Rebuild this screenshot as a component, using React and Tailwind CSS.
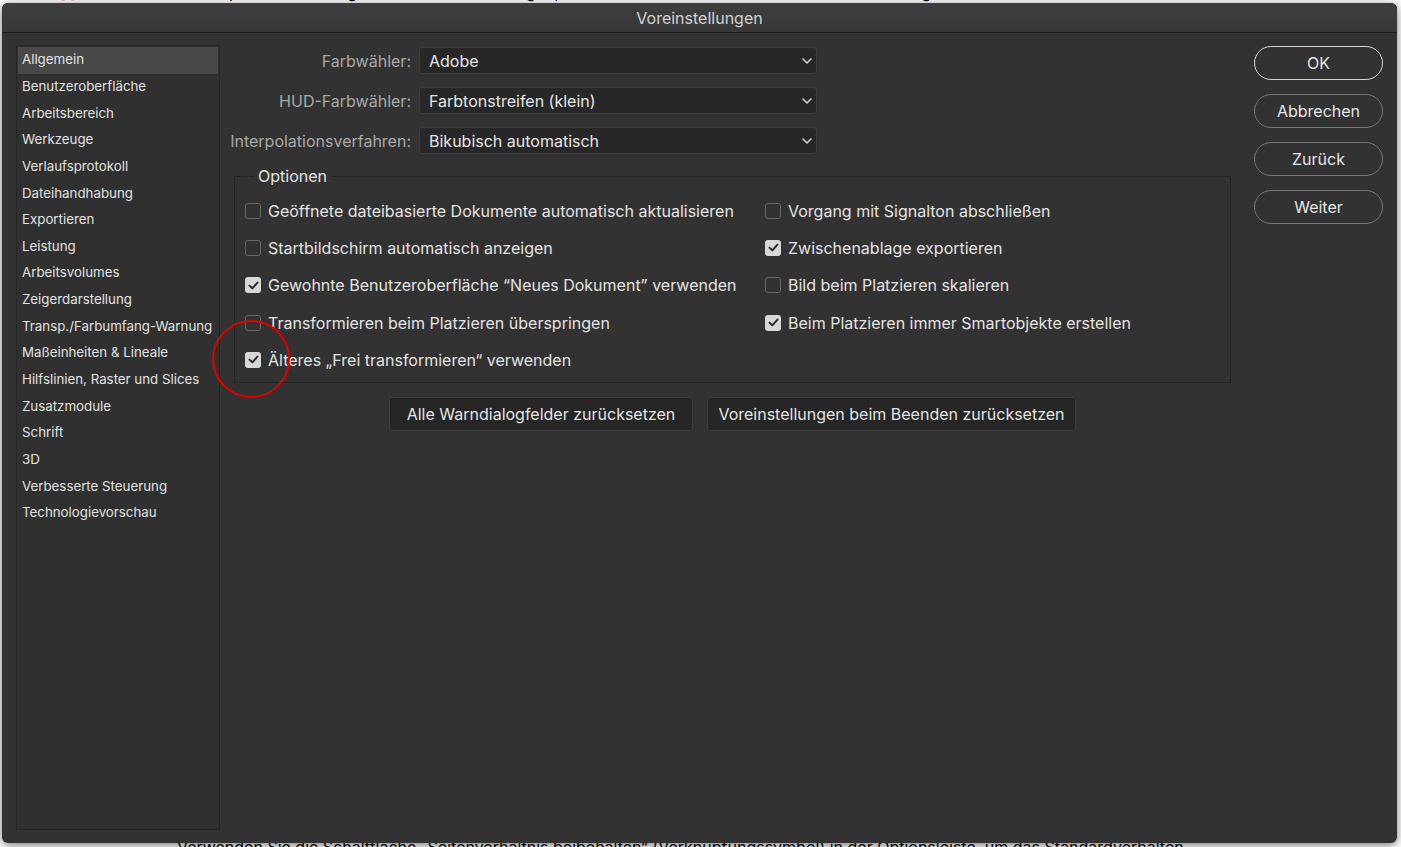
import React from "react";

const FONT = { fontFamily: "Inter, 'Noto Sans', sans-serif" };

const sidebarItems = [
  "Allgemein",
  "Benutzeroberfläche",
  "Arbeitsbereich",
  "Werkzeuge",
  "Verlaufsprotokoll",
  "Dateihandhabung",
  "Exportieren",
  "Leistung",
  "Arbeitsvolumes",
  "Zeigerdarstellung",
  "Transp./Farbumfang-Warnung",
  "Maßeinheiten & Lineale",
  "Hilfslinien, Raster und Slices",
  "Zusatzmodule",
  "Schrift",
  "3D",
  "Verbesserte Steuerung",
  "Technologievorschau",
];

const selects = [
  ["Farbwähler:", "Adobe"],
  ["HUD-Farbwähler:", "Farbtonstreifen (klein)"],
  ["Interpolationsverfahren:", "Bikubisch automatisch"],
];

const leftOpts = [
  [false, "Geöffnete dateibasierte Dokumente automatisch aktualisieren"],
  [false, "Startbildschirm automatisch anzeigen"],
  [true, "Gewohnte Benutzeroberfläche “Neues Dokument” verwenden"],
  [false, "Transformieren beim Platzieren überspringen"],
  [true, "Älteres „Frei transformieren“ verwenden"],
];

const rightOpts = [
  [false, "Vorgang mit Signalton abschließen"],
  [true, "Zwischenablage exportieren"],
  [false, "Bild beim Platzieren skalieren"],
  [true, "Beim Platzieren immer Smartobjekte erstellen"],
];

function Chevron() {
  return (
    <svg width="10" height="6" viewBox="0 0 10 6" fill="none">
      <path d="M1 1l4 4 4-4" stroke="#cfcfcf" strokeWidth="1.6" strokeLinecap="round" strokeLinejoin="round" />
    </svg>
  );
}

function Checkbox({ checked }) {
  if (checked) {
    return (
      <span className="flex h-[16px] w-[16px] shrink-0 items-center justify-center rounded-[3px] bg-[#d8d8d8]">
        <svg width="11" height="9" viewBox="0 0 11 9" fill="none">
          <path d="M1.5 4.6l2.8 2.7L9.5 1.6" stroke="#2b2b2b" strokeWidth="2" strokeLinecap="round" strokeLinejoin="round" />
        </svg>
      </span>
    );
  }
  return <span className="h-[16px] w-[16px] shrink-0 rounded-[3px] border border-[#6a6a6a]" />;
}

function Option({ item }) {
  if (!item) return <div className="h-[37.3px]" />;
  const [checked, label] = item;
  return (
    <div className="flex h-[37.3px] items-center gap-[7px]">
      <Checkbox checked={checked} />
      <span className="whitespace-nowrap text-[16px] text-[#e4e4e4]">{label}</span>
    </div>
  );
}

export default function App() {
  return (
    <div className="relative h-[847px] w-[1401px] overflow-hidden bg-white" style={FONT}>
      {/* page text behind the window */}
      <div className="absolute left-[60px] top-[-18px] whitespace-nowrap text-[16px] leading-[20px] text-black">
        <span className="text-[#e00000]">[ ]</span> Wählen Sie in der Optionsleiste die gewünschten Einstellungen, um das Verhalten beim Transformieren festzulegen.
      </div>
      <div className="absolute left-[177px] top-[837px] whitespace-nowrap text-[16px] leading-[20px] text-black">
        Verwenden Sie die Schaltfläche „Seitenverhältnis beibehalten“ (Verknüpfungssymbol) in der Optionsleiste, um das Standardverhalten
      </div>

      {/* dialog window */}
      <div className="absolute left-[2px] top-[3px] flex h-[840px] w-[1395px] flex-col overflow-hidden rounded-[6px] bg-[#323232] shadow-[0_2px_10px_rgba(0,0,0,0.55)]">
        <div className="flex h-[30px] shrink-0 items-center justify-center border-b border-[#1c1c1c] bg-gradient-to-b from-[#3e3e3e] to-[#383838] text-[16px] text-[#d2d2d2]">
          Voreinstellungen
        </div>

        <div className="flex min-h-0 flex-1 pl-[14px] pr-[14px]">
          {/* category list */}
          <div className="mb-[13px] mt-[12px] w-[204px] shrink-0 border border-[#262626] bg-[#303030] px-px pt-px">
            {sidebarItems.map((s, i) => (
              <div
                key={s}
                className={`flex h-[26.65px] items-center whitespace-nowrap pl-[4px] text-[13.3px] text-[#e2e2e2] ${
                  i === 0 ? "bg-[#484848]" : ""
                }`}
              >
                {s}
              </div>
            ))}
          </div>

          {/* settings */}
          <div className="ml-[6px] flex w-[1005px] flex-col pt-[14px]">
            <div className="flex flex-col gap-[13px]">
              {selects.map(([label, value]) => (
                <div key={label} className="flex items-center">
                  <div className="w-[185px] whitespace-nowrap text-right text-[16px] text-[#a9a9a9]">{label}</div>
                  <div className="ml-[8px] flex h-[27px] w-[398px] items-center justify-between rounded-[3px] border border-[#3e3e3e] bg-[#272727] pl-[9px] pr-[4px]">
                    <span className="text-[16px] text-[#e6e6e6]">{value}</span>
                    <Chevron />
                  </div>
                </div>
              ))}
            </div>

            <fieldset className="ml-[8px] mt-[12px] w-[997px] border border-[#262626] pb-[4px] pl-[10px] pt-[6px]">
              <legend className="ml-[9px] px-[4px] text-[16px] leading-[20px] text-[#e4e4e4]">Optionen</legend>
              <div className="grid grid-cols-[520px_1fr]">
                {leftOpts.map((l, i) => (
                  <React.Fragment key={i}>
                    <Option item={l} />
                    <Option item={rightOpts[i]} />
                  </React.Fragment>
                ))}
              </div>
            </fieldset>

            <div className="ml-[8px] mt-[14px] flex w-[997px] justify-center gap-[14px]">
              <button className="flex h-[34px] w-[304px] items-center justify-center rounded-[3px] border border-[#3c3c3c] bg-[#262626] text-[16px] text-[#e4e4e4]">
                Alle Warndialogfelder zurücksetzen
              </button>
              <button className="flex h-[34px] w-[369px] items-center justify-center rounded-[3px] border border-[#3c3c3c] bg-[#262626] text-[16px] text-[#e4e4e4]">
                Voreinstellungen beim Beenden zurücksetzen
              </button>
            </div>
          </div>

          {/* dialog actions */}
          <div className="ml-auto flex w-[129px] flex-col gap-[14px] pt-[13px]">
            {["OK", "Abbrechen", "Zurück", "Weiter"].map((b, i) => (
              <button
                key={b}
                className={`flex h-[34px] items-center justify-center rounded-full border text-[16px] text-[#e6e6e6] ${
                  i === 0 ? "border-[#d4d4d4]" : "border-[#767676]"
                }`}
              >
                {b}
              </button>
            ))}
          </div>
        </div>
      </div>

      {/* annotation ring */}
      <div className="absolute left-[212px] top-[320px] h-[78px] w-[78px] rounded-full border-[2.5px] border-[#e00000]" />
    </div>
  );
}
